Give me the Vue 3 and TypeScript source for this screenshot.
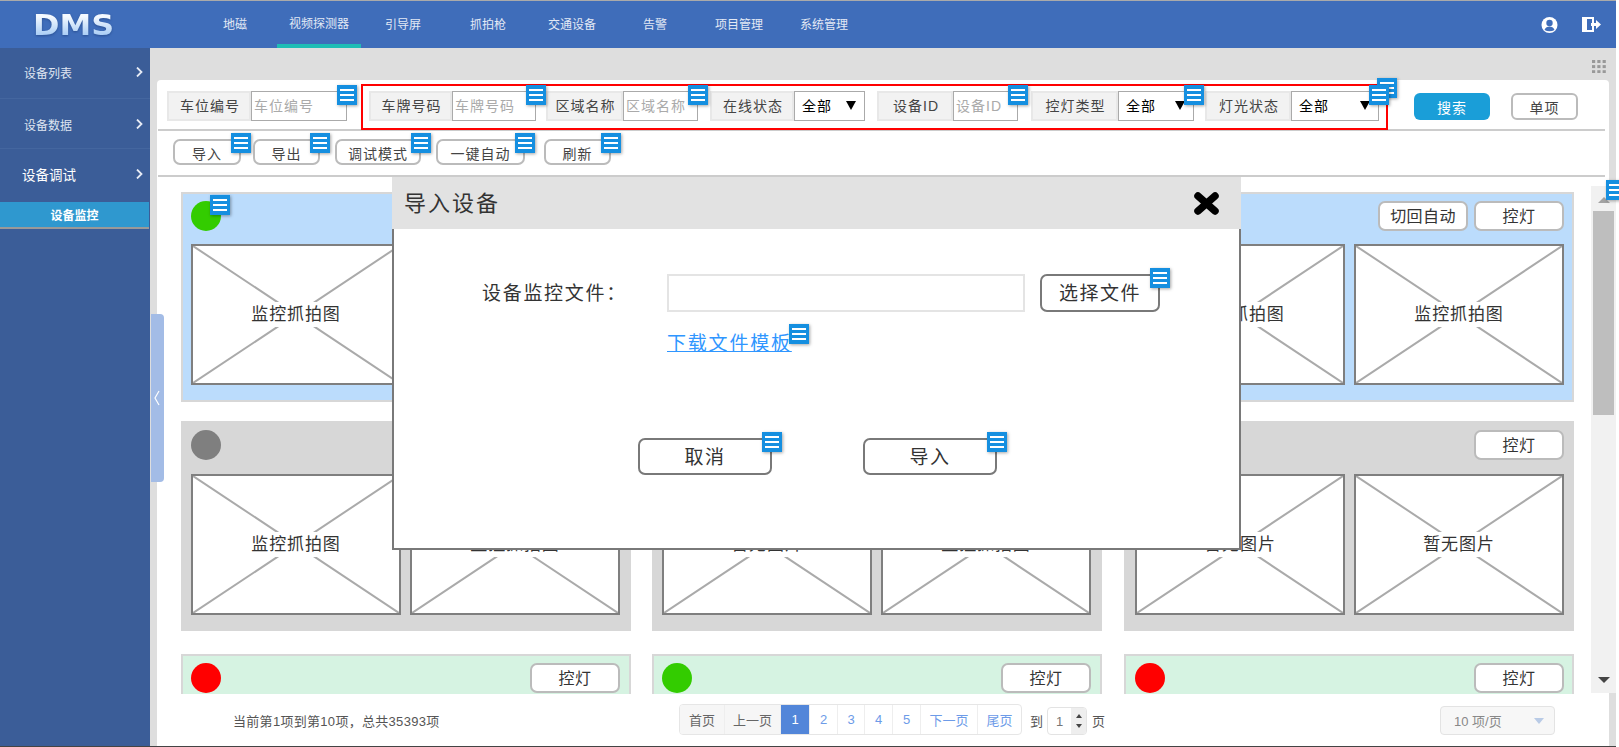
<script setup lang="ts">
const navs = [
  { name: "地磁", gap: 0 },
  { name: "视频探测器", gap: 18, active: true },
  { name: "引导屏", gap: 12 },
  { name: "抓拍枪", gap: 25 },
  { name: "交通设备", gap: 18 },
  { name: "告警", gap: 23 },
  { name: "项目管理", gap: 24 },
  { name: "系统管理", gap: 13 },
]

const filters = [
  { label: "车牌号码", lw: 83, fw: 84, gap: 0, hint: "车牌号码", note: true },
  { label: "区域名称", lw: 77, fw: 75, gap: 10, hint: "区域名称", note: true },
  { label: "在线状态", lw: 84, fw: 71, gap: 12, note: false },
  { label: "设备ID", lw: 76, fw: 65, gap: 12, hint: "设备ID", note: true },
  { label: "控灯类型", lw: 87, fw: 76, gap: 13, note: true },
  { label: "灯光状态", lw: 86, fw: 88, gap: 11, note: true },
]

const tools = [
  { name: "导入", width: 68, gap: 0 },
  { name: "导出", width: 67, gap: 12 },
  { name: "调试模式", width: 86, gap: 15 },
  { name: "一键自动", width: 89, gap: 15 },
  { name: "刷新", width: 67, gap: 19 },
]

const shot = "监控抓拍图"
const none = "暂无图片"
const cards = [
  { tone: "blue", dot: "#33cc00", pics: [shot, shot], note: true },
  { tone: "blue", dot: "#33cc00", pics: [shot, shot] },
  { tone: "blue", dot: "#33cc00", pics: [shot, shot], auto: true },
  { tone: "grey", dot: "#7f7f7f", pics: [shot, shot] },
  { tone: "grey", dot: "#7f7f7f", pics: [none, shot] },
  { tone: "grey", dot: "#7f7f7f", pics: [none, none] },
  // the pictures of this row sit below the fold
  { tone: "green", dot: "#ff0000", pics: [] },
  { tone: "green", dot: "#33cc00", pics: [] },
  { tone: "green", dot: "#ff0000", pics: [] },
]

const pages = [
  { text: "首页", width: 45, kind: "off" },
  { text: "上一页", width: 56, kind: "off" },
  { text: "1", width: 29, kind: "on" },
  { text: "2", width: 28, kind: "" },
  { text: "3", width: 27, kind: "" },
  { text: "4", width: 28, kind: "" },
  { text: "5", width: 28, kind: "" },
  { text: "下一页", width: 57, kind: "" },
  { text: "尾页", width: 43, kind: "" },
]
</script>

<template>
  <div class="app">
    <header class="top">
      <div class="logo">DMS</div>
      <nav class="nav">
        <a
          v-for="n in navs"
          :key="n.name"
          :class="{ active: n.active }"
          :style="{ marginLeft: n.gap + 'px' }"
        >{{ n.name }}</a>
      </nav>
      <svg class="user" width="17" height="16" viewBox="0 0 17 16">
        <circle cx="8.5" cy="8" r="8" fill="#fff" />
        <circle cx="8.5" cy="6" r="3.2" fill="#3f6dba" />
        <path d="M3.5 13c1-3 3-3.6 5-3.6s4 .6 5 3.6c-3 1.6-7 1.6-10 0z" fill="#3f6dba" />
      </svg>
      <svg class="exit" width="19" height="15" viewBox="0 0 19 15">
        <path d="M0 0h12v6h-2V2H5v11h5V9h2v6H0z" fill="#fff" />
        <path d="M9 6h5V3l5 4.5-5 4.5V9H9z" fill="#fff" />
      </svg>
    </header>

    <div class="body">
      <aside class="side">
        <div class="side-item first">设备列表<svg class="chev" width="7" height="10" viewBox="0 0 7 10"><path d="M1 0.5 5.5 5 1 9.5" /></svg></div>
        <div class="side-item second">设备数据<svg class="chev" width="7" height="10" viewBox="0 0 7 10"><path d="M1 0.5 5.5 5 1 9.5" /></svg></div>
        <div class="side-item open">设备调试<svg class="chev" width="7" height="10" viewBox="0 0 7 10"><path d="M1 0.5 5.5 5 1 9.5" /></svg></div>
        <div class="side-sub">设备监控</div>
      </aside>

      <main class="main">
        <div class="strip">
          <svg width="14" height="13" viewBox="0 0 14 13" fill="#999">
            <template v-for="r in 3" :key="r">
              <rect v-for="c in 3" :key="c" :x="(c - 1) * 5.3" :y="(r - 1) * 5.1" width="3.2" height="3" />
            </template>
          </svg>
        </div>

        <section class="panel">
          <div class="filters">
            <div class="group">
              <span class="lab" style="width: 84px">车位编号</span>
              <span class="field hint" style="width: 96px">车位编号<i class="note" /></span>
            </div>

            <div class="redbox">
              <i class="note" />
              <div
                v-for="f in filters"
                :key="f.label"
                class="group"
                :style="{ marginLeft: f.gap + 'px' }"
              >
                <span class="lab" :style="{ width: f.lw + 'px' }">{{ f.label }}</span>
                <span v-if="f.hint" class="field hint" :style="{ width: f.fw + 'px' }">
                  {{ f.hint }}<i v-if="f.note" class="note" />
                </span>
                <span v-else class="field pick" :style="{ width: f.fw + 'px' }">
                  全部<b /><i v-if="f.note" class="note" />
                </span>
              </div>
            </div>

            <button class="search">搜索</button>
            <button class="single">单项</button>
          </div>

          <div class="tools">
            <button
              v-for="t in tools"
              :key="t.name"
              class="tool"
              :style="{ width: t.width + 'px', marginLeft: t.gap + 'px' }"
            >{{ t.name }}<i class="note" /></button>
          </div>

          <div class="list">
            <div class="cards">
              <div v-for="(c, i) in cards" :key="i" class="card" :class="c.tone">
                <div class="card-top">
                  <span class="dot" :style="{ background: c.dot }"><i v-if="c.note" class="note" /></span>
                  <div class="card-btns">
                    <button v-if="c.auto" class="lamp wide">切回自动</button>
                    <button class="lamp">控灯</button>
                  </div>
                </div>
                <div class="pics">
                  <div v-for="(p, j) in c.pics" :key="j" class="pic">
                    <svg class="cross" viewBox="0 0 100 100" preserveAspectRatio="none">
                      <path d="M0 0 100 100M100 0 0 100" vector-effect="non-scaling-stroke" />
                    </svg>
                    <span>{{ p }}</span>
                  </div>
                </div>
              </div>
            </div>
          </div>

          <footer class="foot">
            <span class="count">当前第1项到第10项，总共35393项</span>
            <div class="pager">
              <a
                v-for="p in pages"
                :key="p.text"
                :class="p.kind"
                :style="{ width: p.width + 'px' }"
              >{{ p.text }}</a>
            </div>
            <span class="jump">到</span>
            <span class="spin">
              <span class="spin-val">1</span>
              <span class="spin-arrows"><i class="up" /><i class="down" /></span>
            </span>
            <span class="jump after">页</span>
            <div class="size">10 项/页<i /></div>
          </footer>
        </section>
      </main>
    </div>

    <div class="handle">
      <svg width="6" height="16" viewBox="0 0 6 16"><path d="M5 1 1 8l4 7" /></svg>
    </div>

    <div class="scroll">
      <i class="note" />
      <div class="scroll-up"><i /></div>
      <div class="scroll-thumb"></div>
      <div class="scroll-down"><i /></div>
    </div>

    <div class="modal">
      <div class="modal-head">
        <span>导入设备</span>
        <svg width="27" height="23" viewBox="0 0 27 23">
          <path d="M5 4 22 19M22 4 5 19" stroke="#000" stroke-width="7.5" stroke-linecap="round" fill="none" />
        </svg>
      </div>
      <div class="modal-body">
        <div class="file-row">
          <span class="file-label">设备监控文件：</span>
          <span class="file-box"></span>
          <button class="mbtn pick-file">选择文件<i class="note" /></button>
        </div>
        <a class="tpl">下载文件模板<i class="note" /></a>
        <div class="modal-btns">
          <button class="mbtn cancel">取消<i class="note" /></button>
          <button class="mbtn confirm">导入<i class="note" /></button>
        </div>
      </div>
    </div>
  </div>
</template>

<style>
html, body {
  margin: 0;
  overflow: hidden;
  background: #fff;
}
</style>

<style scoped>
.app {
  position: relative;
  box-sizing: border-box;
  width: 1616px;
  height: 747px;
  display: flex;
  flex-direction: column;
  border-top: 1px solid #aaa;
  border-bottom: 1px solid #444;
  font-family: "Liberation Sans", "Noto Sans CJK SC", sans-serif;
  color: #333;
}
button {
  font-family: inherit;
  padding: 0;
  cursor: pointer;
}

/* annotation badge */
.note {
  position: absolute;
  top: -6px;
  right: -10px;
  width: 20px;
  height: 20px;
  background: #158fe0;
  box-shadow: 1px 1px 3px rgba(0, 0, 0, 0.35);
}
.note::before {
  content: "";
  position: absolute;
  left: 3px;
  top: 4px;
  width: 14px;
  height: 2px;
  background: #fff;
  box-shadow: 0 5px #fff, 0 10px #fff;
}
.field .note {
  top: -7px;
  right: -11px;
}
.tool .note,
.mbtn .note {
  top: -8px;
  right: -12px;
}

.top {
  height: 47px;
  flex: none;
  display: flex;
  align-items: center;
  background: #3f6dba;
  position: relative;
}
.logo {
  margin-left: 33px;
  width: 117px;
  font: bold 29px "DejaVu Sans", sans-serif;
  transform: scaleX(1.1);
  transform-origin: left center;
  background: linear-gradient(#f4f9ff 25%, #a9cdf5 80%);
  -webkit-background-clip: text;
  background-clip: text;
  color: transparent;
  filter: drop-shadow(0 1px 1px rgba(20, 50, 110, 0.5));
}
.nav {
  display: flex;
  height: 100%;
  margin-left: 61px;
  flex: 1;
}
.nav a {
  box-sizing: border-box;
  padding: 0 12px 3px;
  display: flex;
  align-items: center;
  font-size: 12px;
  color: #e3e9f5;
}
.nav a.active {
  border-bottom: 4px solid #1fbdb5;
  padding-bottom: 0;
}
.user {
  margin-right: 24px;
}
.exit {
  margin-right: 15px;
}

.body {
  flex: 1;
  min-height: 0;
  display: flex;
}
.side {
  width: 150px;
  flex: none;
  background: #3b5d98;
  color: #dfe5f1;
}
.side-item {
  height: 50px;
  display: flex;
  align-items: center;
  justify-content: space-between;
  box-sizing: border-box;
  padding: 0 7px 0 24px;
  font-size: 12px;
  border-bottom: 1px solid #44669f;
}
.side-item.first {
  height: 51px;
  padding-bottom: 2px;
}
.side-item.second {
  padding-top: 1px;
}
.side-item.open {
  height: 53px;
  padding: 0 7px 4px 22px;
  font-size: 13.5px;
  color: #fff;
  border-bottom: none;
}
.chev path {
  fill: none;
  stroke: #e6ebf5;
  stroke-width: 1.8;
}
.side-sub {
  width: 149px;
  height: 27px;
  box-sizing: border-box;
  display: flex;
  align-items: center;
  justify-content: center;
  font-size: 12px;
  font-weight: 700;
  color: #fff;
  background: #2f98cf;
  border-bottom: 2px solid #999;
}

.main {
  flex: 1;
  min-width: 0;
  background: #dedede;
  padding: 0 7px;
  display: flex;
  flex-direction: column;
}
.strip {
  height: 32px;
  flex: none;
  display: flex;
  justify-content: flex-end;
  align-items: flex-start;
  padding: 12px 3px 0 0;
  box-sizing: border-box;
}
.panel {
  flex: 1;
  min-height: 0;
  background: #fff;
  border-radius: 4px 4px 0 0;
  display: flex;
  flex-direction: column;
}

.filters {
  height: 51px;
  flex: none;
  box-sizing: border-box;
  margin: 0 4px 0 1px;
  padding-left: 9px;
  display: flex;
  align-items: flex-start;
  border-bottom: 2px solid #ccc;
}
.filters > .group {
  margin-top: 11px;
}
.group {
  display: flex;
  height: 30px;
  flex: none;
}
.lab {
  box-sizing: border-box;
  display: flex;
  align-items: center;
  justify-content: center;
  padding: 0 0 2px 2px;
  background: #f2f2f2;
  border: 2px solid #e8e8e8;
  font-size: 14px;
  letter-spacing: 1px;
  color: #444;
}
.field {
  position: relative;
  box-sizing: border-box;
  display: flex;
  align-items: center;
  background: #fff;
  border: 1px solid #aaa;
  font-size: 14px;
  letter-spacing: 1px;
  white-space: nowrap;
}
.hint {
  padding: 0 0 2px 2px;
  color: #aaa;
}
.pick {
  justify-content: space-between;
  padding: 0 8px 2px 7px;
  color: #000;
}
.pick b {
  width: 0;
  height: 0;
  border-left: 5.5px solid transparent;
  border-right: 5.5px solid transparent;
  border-top: 9px solid #000;
}
.redbox {
  position: relative;
  box-sizing: border-box;
  margin: 4px 0 0 14px;
  height: 46px;
  width: 1027px;
  padding: 5px 0 0 6px;
  border: 2px solid #f00;
  display: flex;
  flex: none;
}
.redbox > .note {
  top: -8px;
  right: -11px;
}
.search,
.single {
  margin-top: 13px;
  height: 27px;
  font-size: 14px;
  letter-spacing: 1px;
  box-sizing: border-box;
  border-radius: 6px;
}
.search {
  margin-left: 26px;
  width: 76px;
  background: #1a9ed8;
  border: none;
  color: #fff;
}
.single {
  margin-left: 21px;
  width: 67px;
  background: #fff;
  border: 2px solid #bbb;
  color: #444;
}

.tools {
  height: 46px;
  flex: none;
  box-sizing: border-box;
  margin: 0 4px 0 1px;
  padding: 8px 0 0 15px;
  display: flex;
  align-items: flex-start;
  border-bottom: 2px solid #ccc;
}
.tool {
  position: relative;
  height: 26px;
  flex: none;
  box-sizing: border-box;
  padding-top: 2px;
  background: #fff;
  border: 2px solid #bbb;
  border-radius: 7px;
  font-size: 14px;
  letter-spacing: 1px;
  color: #444;
}

.list {
  flex: 1;
  min-height: 0;
  overflow: hidden;
  padding: 15px 0 0 24px;
  box-sizing: border-box;
}
.cards {
  display: grid;
  grid-template-columns: 471px 472px 450px;
  row-gap: 19px;
  justify-items: start;
}
.card {
  width: 450px;
  height: 210px;
  box-sizing: border-box;
  padding: 7px 9px 0 8px;
  border: 2px solid #d7d7d7;
}
.card:nth-child(3n) {
  padding: 7px 8px 0 9px;
}
.card:nth-child(n + 7) {
  margin-top: 4px;
}
.card.blue {
  background: #bbdcfc;
}
.card.grey {
  background: #d7d7d7;
}
.card.green {
  background: #d6f3e2;
}
.card-top {
  display: flex;
  justify-content: space-between;
  height: 30px;
  margin-bottom: 13px;
}
.card.grey .card-top {
  margin-bottom: 14px;
}
.dot {
  position: relative;
  width: 30px;
  height: 30px;
  border-radius: 50%;
}
.dot .note {
  top: -6px;
  right: -9px;
}
.card-btns {
  display: flex;
  gap: 6px;
}
.lamp {
  width: 90px;
  height: 30px;
  box-sizing: border-box;
  padding-bottom: 2px;
  background: #fff;
  border: 2px solid #bbb;
  border-radius: 7px;
  font-size: 16px;
  letter-spacing: 0.4px;
  color: #333;
}
.pics {
  display: flex;
  gap: 9px;
}
.pic {
  position: relative;
  width: 210px;
  height: 141px;
  box-sizing: border-box;
  flex: none;
  display: flex;
  align-items: center;
  justify-content: center;
  border: 2px solid #7f7f7f;
  background: #fff;
}
.cross {
  position: absolute;
  left: 0;
  top: 0;
  width: 100%;
  height: 100%;
}
.cross path {
  fill: none;
  stroke: #aaa;
  stroke-width: 2;
}
.pic span {
  position: relative;
  width: 100px;
  height: 25px;
  padding-bottom: 4px;
  box-sizing: border-box;
  display: flex;
  align-items: center;
  justify-content: center;
  white-space: nowrap;
  background: #fff;
  font-size: 17px;
  letter-spacing: 0.9px;
  color: #333;
}

.foot {
  height: 52px;
  flex: none;
  box-sizing: border-box;
  padding-top: 10px;
  display: flex;
  align-items: flex-start;
  font-size: 13px;
  background: #fff;
  position: relative;
}
.count {
  margin: 7px 0 0 76px;
  width: 446px;
  flex: none;
  color: #555;
  letter-spacing: 0.3px;
}
.pager {
  display: flex;
  height: 31px;
  box-sizing: border-box;
  border: 1px solid #e6e6e6;
  border-radius: 4px;
  overflow: hidden;
}
.pager a {
  box-sizing: border-box;
  display: flex;
  align-items: center;
  justify-content: center;
  color: #6d9be8;
  border-right: 1px solid #eee;
}
.pager a:last-child {
  border-right: none;
}
.pager a.off {
  background: #f6f6f6;
  color: #666;
}
.pager a.on {
  background: #5286d9;
  color: #fff;
}
.jump {
  margin: 7px 4px 0 8px;
  color: #555;
}
.jump.after {
  margin-left: 5px;
}
.spin {
  margin-top: 3px;
  width: 40px;
  height: 28px;
  box-sizing: border-box;
  display: flex;
  border: 1px solid #e3e3e3;
  border-radius: 4px;
  overflow: hidden;
}
.spin-val {
  flex: 1;
  display: flex;
  align-items: center;
  justify-content: center;
  color: #777;
}
.spin-arrows {
  width: 15px;
  background: #eee;
  display: flex;
  flex-direction: column;
  align-items: center;
  justify-content: space-between;
  padding: 6px 0;
  box-sizing: border-box;
}
.spin-arrows i {
  border-left: 3px solid transparent;
  border-right: 3px solid transparent;
}
.spin-arrows .up {
  border-bottom: 4px solid #444;
}
.spin-arrows .down {
  border-top: 4px solid #444;
}
.size {
  margin: 2px 54px 0 auto;
  width: 115px;
  height: 29px;
  box-sizing: border-box;
  padding: 0 10px 0 13px;
  display: flex;
  align-items: center;
  justify-content: space-between;
  background: #f7f7f7;
  border: 1px solid #e3e3e3;
  border-radius: 4px;
  color: #888;
}
.size i {
  border-left: 5px solid transparent;
  border-right: 5px solid transparent;
  border-top: 6px solid #b9cbe6;
}

.handle {
  position: absolute;
  left: 151px;
  top: 313px;
  width: 13px;
  height: 168px;
  background: #a3bce6;
  border-radius: 0 4px 4px 0;
  display: flex;
  align-items: center;
  padding-left: 3px;
  box-sizing: border-box;
}
.handle path {
  fill: none;
  stroke: #fff;
  stroke-width: 1.2;
}

.scroll {
  position: absolute;
  left: 1591px;
  top: 185px;
  width: 25px;
  height: 507px;
  background: #f1f1f1;
  display: flex;
  flex-direction: column;
}
.scroll > .note {
  top: -6px;
  right: -10px;
}
.scroll-up {
  height: 25px;
  flex: none;
  display: flex;
  justify-content: center;
  padding-top: 11px;
  box-sizing: border-box;
}
.scroll-up i {
  height: 0;
  border-left: 6px solid transparent;
  border-right: 6px solid transparent;
  border-bottom: 6px solid #a3a3a3;
}
.scroll-thumb {
  width: 21px;
  height: 204px;
  margin-left: 2px;
  flex: none;
  background: #bebebe;
}
.scroll-down {
  flex: 1;
  display: flex;
  justify-content: center;
  align-items: flex-end;
  padding-bottom: 10px;
}
.scroll-down i {
  border-left: 6px solid transparent;
  border-right: 6px solid transparent;
  border-top: 6px solid #444;
}

.modal {
  position: absolute;
  left: 392px;
  top: 176px;
  width: 849px;
  height: 373px;
  display: flex;
  flex-direction: column;
}
.modal-head {
  height: 52px;
  flex: none;
  box-sizing: border-box;
  display: flex;
  align-items: center;
  justify-content: space-between;
  padding: 0 21px 0 12px;
  background: #e2e2e2;
  font-size: 22px;
  letter-spacing: 2px;
  color: #333;
}
.modal-head span {
  padding-bottom: 5px;
}
.modal-body {
  flex: 1;
  background: #fff;
  border: 2px solid #797979;
  border-top: none;
  box-sizing: border-box;
  padding-top: 45px;
}
.file-row {
  display: flex;
  height: 38px;
  margin-left: 88px;
  align-items: center;
}
.file-label {
  width: 185px;
  flex: none;
  padding-bottom: 3px;
  font-size: 19px;
  letter-spacing: 1.7px;
  color: #333;
}
.file-box {
  width: 358px;
  height: 38px;
  box-sizing: border-box;
  flex: none;
  border: 2px solid #e4e4e4;
}
.mbtn {
  position: relative;
  box-sizing: border-box;
  padding-bottom: 3px;
  background: #fff;
  border: 2px solid #797979;
  border-radius: 7px;
  font-size: 19px;
  letter-spacing: 1.5px;
  color: #333;
}
.pick-file {
  margin-left: 15px;
  width: 120px;
  height: 38px;
}
.tpl {
  position: relative;
  display: inline-block;
  margin: 20px 0 0 273px;
  height: 24px;
  line-height: 24px;
  font-size: 19px;
  letter-spacing: 1.8px;
  text-decoration: underline;
  color: #2f96ff;
}
.tpl .note {
  top: -8px;
  right: -17px;
}
.modal-btns {
  display: flex;
  margin: 82px 0 0 244px;
}
.cancel {
  width: 134px;
  height: 37px;
}
.confirm {
  width: 134px;
  height: 37px;
  margin-left: 91px;
}
</style>
